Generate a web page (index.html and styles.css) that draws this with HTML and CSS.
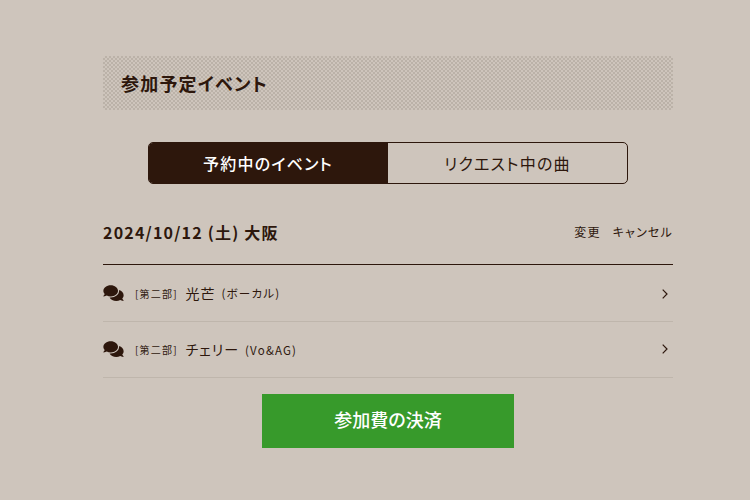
FILE: index.html
```html
<!DOCTYPE html>
<html lang="ja">
<head>
<meta charset="utf-8">
<title>参加予定イベント</title>
<link rel="stylesheet" href="styles.css">
</head>
<body>
<main class="page">
  <h1 class="heading">参加予定イベント</h1>
  <nav class="tabs">
    <a class="tab active">予約中のイベント</a>
    <a class="tab">リクエスト中の曲</a>
  </nav>
  <section>
    <header class="event">
      <h2 class="date">2024/10/12 (土) 大阪</h2>
      <div class="actions"><a>変更</a><a>キャンセル</a></div>
    </header>
    <ul class="songs">
      <li class="song">
        <svg class="chat" viewBox="0 0 576 512"><path d="M416 192c0-88.400-93.100-160-208-160S0 103.600 0 192c0 34.300 14.100 65.900 38 92-13.400 30.200-35.500 54.200-35.800 54.500-2.200 2.300-2.800 5.700-1.500 8.700S4.800 352 8 352c36.600 0 66.900-12.300 88.700-25C128.900 342.700 167 352 208 352c114.900 0 208-71.600 208-160zm122 220c23.900-26 38-57.700 38-92 0-66.900-53.500-124.200-129.300-148.100.9 6.600 1.300 13.300 1.300 20.100 0 105.900-107.700 192-240 192-10.800 0-21.300-.8-31.700-1.900C207.800 439.600 281.800 480 368 480c41 0 79.100-9.200 111.300-25 21.800 12.700 52.100 25 88.700 25 3.200 0 6.100-1.900 7.300-4.800 1.300-2.900.7-6.300-1.500-8.700-.3-.3-22.400-24.200-35.800-54.500z"/></svg>
        <span class="part">[第二部]</span><span class="title">光芒</span><span class="role">(ボーカル)</span>
        <svg class="arrow" viewBox="0 0 6 10"><path d="M.7.7 5 5 .7 9.300"/></svg>
      </li>
      <li class="song">
        <svg class="chat" viewBox="0 0 576 512"><path d="M416 192c0-88.400-93.100-160-208-160S0 103.600 0 192c0 34.300 14.100 65.900 38 92-13.400 30.200-35.500 54.200-35.800 54.500-2.200 2.300-2.800 5.700-1.500 8.700S4.800 352 8 352c36.600 0 66.900-12.300 88.700-25C128.900 342.700 167 352 208 352c114.900 0 208-71.600 208-160zm122 220c23.900-26 38-57.700 38-92 0-66.900-53.500-124.200-129.300-148.100.9 6.600 1.300 13.300 1.300 20.100 0 105.900-107.700 192-240 192-10.800 0-21.300-.8-31.700-1.900C207.800 439.600 281.800 480 368 480c41 0 79.100-9.200 111.300-25 21.800 12.700 52.100 25 88.700 25 3.200 0 6.100-1.900 7.300-4.800 1.300-2.900.7-6.300-1.500-8.700-.3-.3-22.400-24.200-35.800-54.500z"/></svg>
        <span class="part">[第二部]</span><span class="title">チェリー</span><span class="role">(Vo&amp;AG)</span>
        <svg class="arrow" viewBox="0 0 6 10"><path d="M.7.7 5 5 .7 9.300"/></svg>
      </li>
    </ul>
  </section>
  <a class="pay">参加費の決済</a>
</main>
</body>
</html>
```

FILE: styles.css
```css
* { box-sizing: border-box; }
body {
  margin: 0;
  background: #cec5bc;
  color: #2d170c;
  font-family: "Noto Sans CJK JP", sans-serif;
  font-feature-settings: "palt";
  line-height: 1.5;
}
h1, h2, ul { margin: 0; padding: 0; }
.page { width: 570px; margin-left: 103px; padding-top: 56px; }
.heading {
  display: flex;
  align-items: center;
  height: 54px;
  padding: 0 0 0 18px;
  font-size: 18px;
  letter-spacing: 1.2px;
  background: repeating-conic-gradient(#bbb2a8 0 25%, #cec5bc 0 50%) 0 0 / 4px 4px;
}
.tabs {
  display: flex;
  width: 480px;
  height: 42px;
  margin: 32px 45px 0;
  border: 1px solid #2d170c;
  border-radius: 5px;
  overflow: hidden;
}
.tab {
  flex: 0 0 239px;
  display: flex;
  align-items: center;
  justify-content: center;
  font-size: 16px;
  letter-spacing: 1.2px;
}
.active { background: #2d170c; color: #fff; font-weight: 500; padding-right: 1px; }
.event {
  display: flex;
  justify-content: space-between;
  align-items: center;
  height: 65px;
  margin-top: 16px;
  border-bottom: 1px solid #2d170c;
}
.date { font-size: 16px; letter-spacing: 1.2px; }
.actions { display: flex; gap: 12px; font-size: 12px; letter-spacing: 1.2px; }
.songs { list-style: none; }
.song {
  display: flex;
  align-items: center;
  height: 56px;
  border-bottom: 1px solid #bfb6ac;
}
.song:first-child { height: 57px; }
.chat { width: 21px; height: 18px; margin-right: 11px; fill: #2d170c; }
.song + .song .chat { margin-bottom: 1px; }
.part { width: 50.5px; font-size: 10px; letter-spacing: 1.2px; }
.title { font-size: 14px; letter-spacing: 1px; margin-right: 6px; }
.role { padding-top: 2px; font-size: 11.5px; letter-spacing: 1.2px; }
.arrow { width: 6px; height: 10px; margin: 2px 5px 0 auto; fill: none; stroke: #2d170c; stroke-width: 1.2; }
.song + .song .arrow { margin-top: 0; margin-bottom: 1px; }
.pay {
  display: flex;
  align-items: center;
  justify-content: center;
  width: 252px;
  height: 54px;
  margin: 16px 0 0 159px;
  padding-bottom: 3px;
  background: #379a2b;
  color: #fff;
  font-size: 18px;
  font-weight: 500;
}
```
